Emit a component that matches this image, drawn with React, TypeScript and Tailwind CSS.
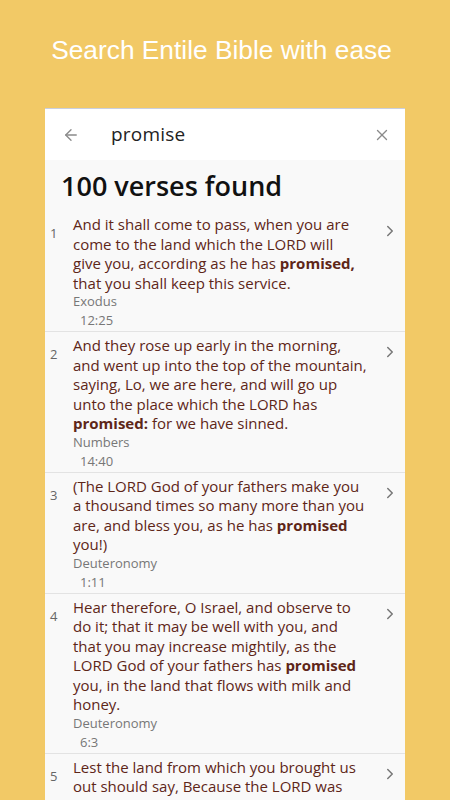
import { ChevronRight, ArrowLeft, X } from 'lucide-react';

type Verse = {
  lines: (string | { b: string; rest?: string; pre?: string })[];
  book: string;
  ref: string;
};

const VERSES: Verse[] = [
  {
    lines: [
      'And it shall come to pass, when you are',
      'come to the land which the LORD will',
      { pre: 'give you, according as he has ', b: 'promised,' },
      'that you shall keep this service.',
    ],
    book: 'Exodus',
    ref: '12:25',
  },
  {
    lines: [
      'And they rose up early in the morning,',
      'and went up into the top of the mountain,',
      'saying, Lo, we are here, and will go up',
      'unto the place which the LORD has',
      { b: 'promised:', rest: ' for we have sinned.' },
    ],
    book: 'Numbers',
    ref: '14:40',
  },
  {
    lines: [
      '(The LORD God of your fathers make you',
      'a thousand times so many more than you',
      { pre: 'are, and bless you, as he has ', b: 'promised' },
      'you!)',
    ],
    book: 'Deuteronomy',
    ref: '1:11',
  },
  {
    lines: [
      'Hear therefore, O Israel, and observe to',
      'do it; that it may be well with you, and',
      'that you may increase mightily, as the',
      { pre: 'LORD God of your fathers has ', b: 'promised' },
      'you, in the land that flows with milk and',
      'honey.',
    ],
    book: 'Deuteronomy',
    ref: '6:3',
  },
  {
    lines: [
      'Lest the land from which you brought us',
      'out should say, Because the LORD was',
      'not able to bring them into the land',
    ],
    book: 'Deuteronomy',
    ref: '9:28',
  },
];

const App = () => {
  return (
    <div className="w-[450px] h-[800px] overflow-hidden bg-[#f2c966] flex flex-col items-center">
      <h1 className="mt-[33px] mr-[7px] text-white text-[26.3px] leading-[34px] font-['Liberation_Sans',Arial,sans-serif]">
        Search Entile Bible with ease
      </h1>

      <div className="mt-[41px] w-[360px] flex-1 bg-[#f9f9f9] border-t border-[#c9cfe0] font-['Open_Sans',sans-serif]">
        <div className="h-[51px] bg-white flex items-center">
          <ArrowLeft className="ml-[17px] w-[18px] h-[18px] text-[#8a8a8a]" strokeWidth={1.8} />
          <span className="ml-[31px] text-[19px] text-[#222] tracking-[0.2px]">promise</span>
          <X className="ml-auto mr-[14px] w-[18px] h-[18px] text-[#8a8a8a]" strokeWidth={1.8} />
        </div>

        <div className="px-4 pt-[8px] pb-[7px] text-[27px] leading-[36px] font-semibold text-[#111]">
          100 verses found
        </div>

        <div>
          {VERSES.map((v, i) => (
            <div key={i} className="flex border-b border-[#e3e3e3] pt-[4px]">
              <div className="w-[28px] pl-[5px] pt-[9px] text-[13px] text-[#666]">{i + 1}</div>
              <div className="flex-1">
                <div className="text-[15px] leading-[19.5px] text-[#5e2618]">
                  {v.lines.map((l, j) =>
                    typeof l === 'string' ? (
                      <div key={j} className="whitespace-nowrap">{l}</div>
                    ) : (
                      <div key={j} className="whitespace-nowrap">
                        {l.pre}
                        <span className="font-bold">{l.b}</span>
                        {l.rest}
                      </div>
                    )
                  )}
                </div>
                <div className="text-[13px] leading-[16px] text-[#777]">{v.book}</div>
                <div className="pl-[7px] text-[13px] leading-[22px] text-[#777]">{v.ref}</div>
              </div>
              <div className="w-[28px] pt-[7px] pl-[4px]">
                <ChevronRight className="w-[18px] h-[18px] text-[#777]" strokeWidth={2} />
              </div>
            </div>
          ))}
        </div>
      </div>
    </div>
  );
};

export default App;
